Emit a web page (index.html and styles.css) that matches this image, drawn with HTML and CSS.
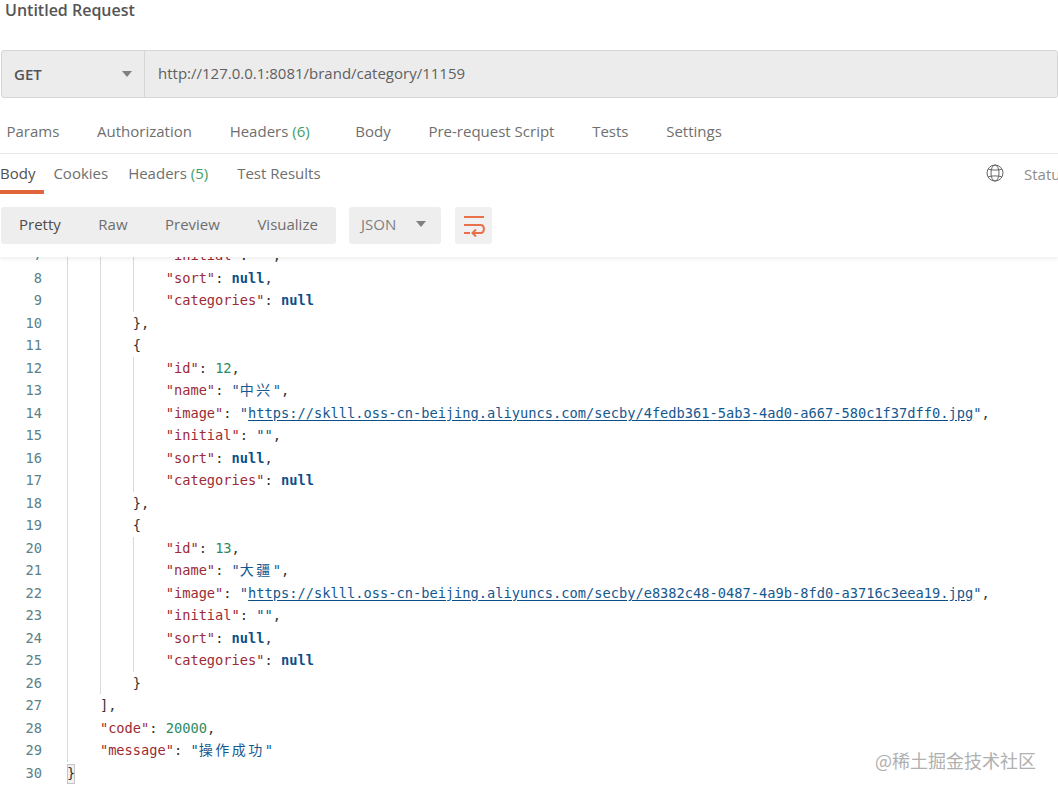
FILE: index.html
```html
<!DOCTYPE html>
<html lang="en">
<head>
    <meta charset="UTF-8">
    <meta name="viewport" content="width=device-width, initial-scale=1.0">
    <title>Untitled Request</title>
    <link rel="stylesheet" href="styles.css">
</head>
<body>
    <div class="header">
        <div class="title">Untitled Request</div>

        <div class="url-bar">
            <div class="method">
                <span>GET</span>
                <span class="caret"></span>
            </div>
            <div class="url">http://127.0.0.1:8081/brand/category/11159</div>
        </div>

        <div class="req-tabs">
            <span>Params</span>
            <span>Authorization</span>
            <span class="has-count">Headers <em>(6)</em></span>
            <span>Body</span>
            <span>Pre-request Script</span>
            <span>Tests</span>
            <span>Settings</span>
        </div>

        <div class="res-tabs">
            <span class="res-tab active">Body</span>
            <span class="res-tab">Cookies</span>
            <span class="res-tab res-count">Headers <em>(5)</em></span>
            <span class="res-tab">Test Results</span>
            <div class="res-meta">
                <svg class="globe" width="18" height="18" viewBox="0 0 18 18" fill="none" stroke="#666" stroke-width="1">
                    <circle cx="9" cy="9" r="8"/>
                    <ellipse cx="9" cy="9" rx="4" ry="8"/>
                    <path d="M2.2 5.2C6 6.4 12 6.4 15.8 5.2M2.2 12.8C6 11.6 12 11.6 15.8 12.8"/>
                </svg>
                <span>Status</span>
            </div>
        </div>

        <div class="toolbar">
            <div class="modes">
                <span class="mode active">Pretty</span>
                <span class="mode">Raw</span>
                <span class="mode">Preview</span>
                <span class="mode">Visualize</span>
            </div>
            <div class="format">
                <span>JSON</span>
                <span class="caret"></span>
            </div>
            <div class="wrap-btn">
                <svg width="22" height="22" viewBox="0 0 22 22" fill="none" stroke="#e8704a" stroke-width="2">
                    <path d="M1 2H21M1 10H17.5C22 10 22 18 17.5 18H10"/>
                    <path d="M13 14.5L9.5 18L13 21.5"/>
                    <path d="M1 18H7"/>
                </svg>
            </div>
        </div>
    </div>

    <div class="viewer">
        <div class="lines">
            <div class="line"><span class="num">7</span><i></i><i></i><i></i><code><b class="k">"initial"</b>: <b class="s">""</b>,</code></div>
            <div class="line"><span class="num">8</span><i></i><i></i><i></i><code><b class="k">"sort"</b>: <b class="n">null</b>,</code></div>
            <div class="line"><span class="num">9</span><i></i><i></i><i></i><code><b class="k">"categories"</b>: <b class="n">null</b></code></div>
            <div class="line"><span class="num">10</span><i></i><i></i><code>},</code></div>
            <div class="line"><span class="num">11</span><i></i><i></i><code>{</code></div>
            <div class="line"><span class="num">12</span><i></i><i></i><i></i><code><b class="k">"id"</b>: <b class="d">12</b>,</code></div>
            <div class="line"><span class="num">13</span><i></i><i></i><i></i><code><b class="k">"name"</b>: <b class="s">"<span class="cjk">中兴</span>"</b>,</code></div>
            <div class="line"><span class="num">14</span><i></i><i></i><i></i><code><b class="k">"image"</b>: <b class="s">"<u>https://sklll.oss-cn-beijing.aliyuncs.com/secby/4fedb361-5ab3-4ad0-a667-580c1f37dff0.jpg</u>"</b>,</code></div>
            <div class="line"><span class="num">15</span><i></i><i></i><i></i><code><b class="k">"initial"</b>: <b class="s">""</b>,</code></div>
            <div class="line"><span class="num">16</span><i></i><i></i><i></i><code><b class="k">"sort"</b>: <b class="n">null</b>,</code></div>
            <div class="line"><span class="num">17</span><i></i><i></i><i></i><code><b class="k">"categories"</b>: <b class="n">null</b></code></div>
            <div class="line"><span class="num">18</span><i></i><i></i><code>},</code></div>
            <div class="line"><span class="num">19</span><i></i><i></i><code>{</code></div>
            <div class="line"><span class="num">20</span><i></i><i></i><i></i><code><b class="k">"id"</b>: <b class="d">13</b>,</code></div>
            <div class="line"><span class="num">21</span><i></i><i></i><i></i><code><b class="k">"name"</b>: <b class="s">"<span class="cjk">大疆</span>"</b>,</code></div>
            <div class="line"><span class="num">22</span><i></i><i></i><i></i><code><b class="k">"image"</b>: <b class="s">"<u>https://sklll.oss-cn-beijing.aliyuncs.com/secby/e8382c48-0487-4a9b-8fd0-a3716c3eea19.jpg</u>"</b>,</code></div>
            <div class="line"><span class="num">23</span><i></i><i></i><i></i><code><b class="k">"initial"</b>: <b class="s">""</b>,</code></div>
            <div class="line"><span class="num">24</span><i></i><i></i><i></i><code><b class="k">"sort"</b>: <b class="n">null</b>,</code></div>
            <div class="line"><span class="num">25</span><i></i><i></i><i></i><code><b class="k">"categories"</b>: <b class="n">null</b></code></div>
            <div class="line"><span class="num">26</span><i></i><i></i><code>}</code></div>
            <div class="line"><span class="num">27</span><i></i><code>],</code></div>
            <div class="line"><span class="num">28</span><i></i><code><b class="k">"code"</b>: <b class="d">20000</b>,</code></div>
            <div class="line"><span class="num">29</span><i></i><code><b class="k">"message"</b>: <b class="s">"<span class="cjk">操作成功</span>"</b></code></div>
            <div class="line"><span class="num">30</span><code><span class="match">}</span></code></div>
        </div>
    </div>

    <div class="watermark">@稀土掘金技术社区</div>
</body>
</html>
```

FILE: styles.css
```css
html, body {
    margin: 0;
    height: 792px;
    overflow: hidden;
}

body {
    background: #fff;
    font-family: "Open Sans", "Liberation Sans", sans-serif;
    font-size: 15px;
    color: #6f6f6f;
}

.header {
    position: relative;
    z-index: 1;
    background: #fff;
    box-shadow: 0 2px 4px rgba(0, 0, 0, 0.07);
}

.title {
    height: 20px;
    line-height: 20px;
    margin-bottom: 30px;
    padding-left: 5px;
    font-size: 16px;
    font-weight: 600;
    color: #555;
}

.url-bar {
    display: flex;
    height: 48px;
    margin-left: 1px;
    box-sizing: border-box;
    background: #ececec;
    border: 1px solid #d6d6d6;
    border-radius: 3px;
}

.method {
    display: flex;
    align-items: center;
    justify-content: space-between;
    width: 143px;
    box-sizing: border-box;
    padding: 0 12px 1px;
    border-right: 1px solid #d6d6d6;
    font-weight: 600;
    color: #555;
}

.caret {
    width: 0;
    height: 0;
    border-left: 5px solid transparent;
    border-right: 5px solid transparent;
    border-top: 6px solid #808080;
}

.url {
    padding-left: 13px;
    line-height: 45px;
    color: #5f5f5f;
}

.req-tabs {
    display: flex;
    gap: 37.7px;
    padding: 23px 0 12px 6.5px;
    line-height: 20px;
    border-bottom: 1px solid #e6e6e6;
}

.has-count {
    margin-right: 8px;
}

em {
    font-style: normal;
    color: #3f9e68;
}

.res-tabs {
    display: flex;
    padding-top: 9px;
    line-height: 20px;
}

.res-tab {
    margin-right: 20px;
    padding-bottom: 7px;
    border-bottom: 4px solid transparent;
}

.res-tab.active {
    margin-right: 9px;
    padding-right: 9px;
    border-bottom-color: #e0663a;
    color: #505050;
}

.res-tab.res-count {
    margin-right: 29px;
}

.res-meta {
    display: flex;
    gap: 20px;
    align-self: flex-start;
    width: 72px;
    margin: 1px 0 0 auto;
    overflow: hidden;
    white-space: nowrap;
    color: #8c8c8c;
}

.globe {
    flex-shrink: 0;
}

.toolbar {
    display: flex;
    height: 37px;
    margin-top: 13px;
    padding: 0 0 13px 1px;
}

.modes {
    display: flex;
    align-items: center;
    gap: 37.5px;
    width: 335px;
    box-sizing: border-box;
    padding: 0 0 3px 18px;
    background: #eee;
    border-radius: 3px;
}

.mode.active {
    color: #4c4c4c;
}

.format {
    display: flex;
    align-items: center;
    justify-content: space-between;
    width: 92px;
    box-sizing: border-box;
    margin-left: 13px;
    padding: 0 15px 3px 12px;
    background: #eee;
    border-radius: 3px;
    color: #808080;
}

.wrap-btn {
    display: flex;
    align-items: center;
    justify-content: center;
    width: 37px;
    margin-left: 14px;
    background: #f0f0f0;
    border-radius: 3px;
}

.viewer {
    height: 535px;
    overflow: hidden;
}

.lines {
    margin-top: -13px;
    font-family: "DejaVu Sans Mono", monospace;
    font-size: 13.7px;
    color: #333;
}

.line {
    display: flex;
    height: 22.5px;
    line-height: 22.5px;
    white-space: pre;
}

.num {
    width: 42px;
    margin-right: 25px;
    text-align: right;
    color: #5b8087;
}

/* indent guide, one per nesting level */
.line i {
    flex-shrink: 0;
    width: 32.9px;
    box-sizing: border-box;
    border-left: 1px solid #d9d9d9;
}

code {
    font-family: inherit;
}

code b {
    font-weight: 400;
}

.k {
    color: #9c2b35;
}

.s {
    color: #15588f;
}

.d {
    color: #2f8a64;
}

code b.n {
    font-weight: 700;
    color: #0b4f8a;
}

u {
    text-decoration-color: #0b4f8a;
    text-underline-offset: 2px;
}

.cjk {
    font-family: "Noto Sans CJK SC", sans-serif;
    font-size: 14px;
    line-height: 0;
    letter-spacing: 2.5px;
}

.match {
    display: inline-block;
    height: 20px;
    line-height: 19px;
    box-sizing: border-box;
    background: #f2f2f2;
    outline: 1px solid #c4c4c4;
    outline-offset: -1px;
}

.watermark {
    position: absolute;
    left: 875px;
    top: 747px;
    font-family: "Noto Sans CJK SC", sans-serif;
    font-size: 18px;
    line-height: 26px;
    color: #b0b0b0;
}
```
